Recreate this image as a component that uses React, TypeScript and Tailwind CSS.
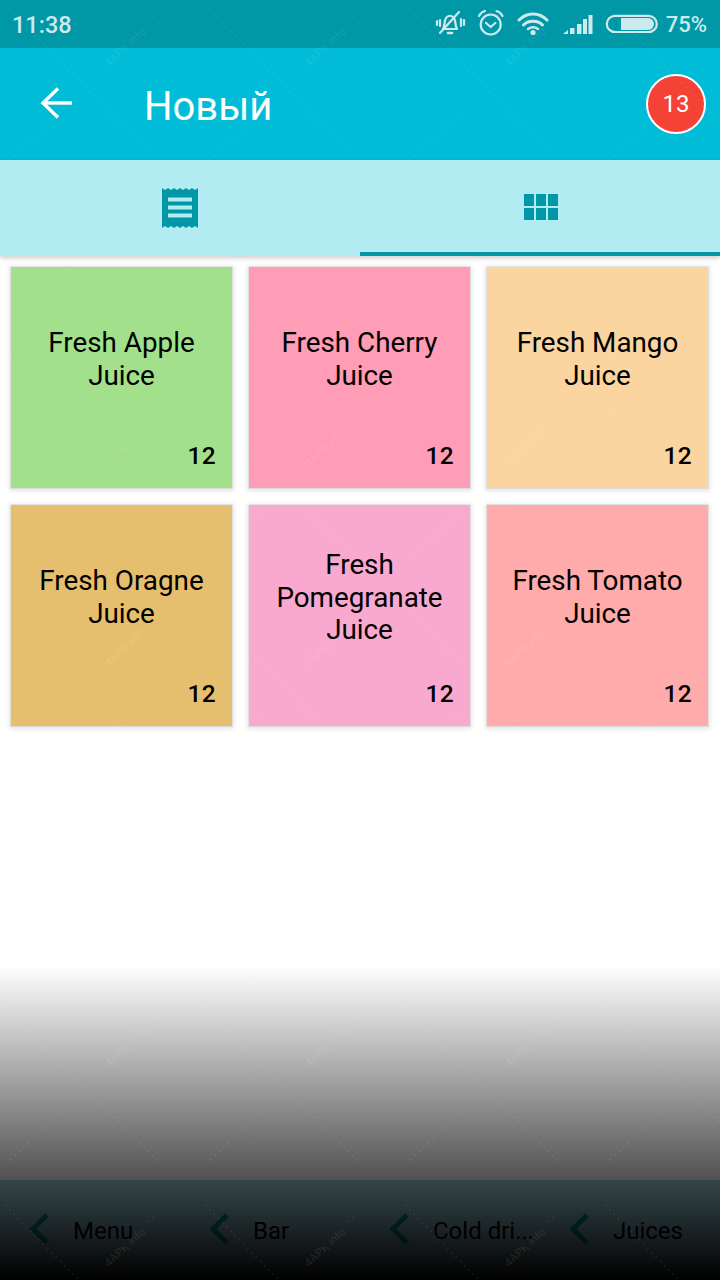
const TILES = [
  { name: ['Fresh Apple', 'Juice'], bg: 'bg-[#a2e08c]' },
  { name: ['Fresh Cherry', 'Juice'], bg: 'bg-[#ff9cb6]' },
  { name: ['Fresh Mango', 'Juice'], bg: 'bg-[#fad59f]' },
  { name: ['Fresh Oragne', 'Juice'], bg: 'bg-[#e6bf6e]' },
  { name: ['Fresh', 'Pomegranate', 'Juice'], bg: 'bg-[#f9a8cf]' },
  { name: ['Fresh Tomato', 'Juice'], bg: 'bg-[#ffabab]' },
]

const CRUMBS = ['Menu', 'Bar', 'Cold dri...', 'Juices']

const MARK_X = [0, 200, 400, 600]
const MARK_Y = [0, 200, 400, 600, 800, 1000, 1200]

function StatusIcons() {
  return (
    <svg width="280" height="48" viewBox="0 0 280 48" fill="none" stroke="#cdeaee" className="shrink-0">
      {/* muted bell */}
      <g strokeWidth="2.2" strokeLinecap="round" strokeLinejoin="round">
        <path d="M21 29 C23 26 22 21 24 18 C26 15 30 15 32 18 C34 21 33 26 35 29 Z" />
        <path d="M26 33 h4" strokeWidth="2.6" />
        <path d="M18 33 L37 12" />
        <path d="M18 20 v6 M15 21 v4 M39 19 v7 M42 20 v5" />
      </g>
      {/* alarm */}
      <g strokeWidth="2.2" strokeLinecap="round" strokeLinejoin="round">
        <circle cx="68.7" cy="24.5" r="10" />
        <path d="M64 23 l4.7 4 l4.7 -4" />
        <path d="M57 16 q2 -4 6 -5 M80.5 16 q-2 -4 -6 -5" />
      </g>
      {/* wifi */}
      <g strokeWidth="3" strokeLinecap="round">
        <path d="M97 20 C105 12 117 12 125 20" />
        <path d="M101.5 25 C106 20 116 20 120.5 25" />
        <path d="M106 29 C109 27 113 27 116 29" strokeWidth="2.5" />
      </g>
      <circle cx="111" cy="32.5" r="2.6" fill="#cdeaee" stroke="none" />
      {/* signal */}
      <g fill="#cdeaee" stroke="none">
        <path d="M141 34 l5 -4 v4 z" />
        <rect x="148" y="28" width="4.5" height="6" />
        <rect x="155" y="24" width="4.5" height="10" />
        <rect x="161" y="19" width="4" height="15" />
        <rect x="166.5" y="15" width="4" height="19" />
      </g>
      {/* battery */}
      <rect x="184.8" y="15.8" width="50" height="16.2" rx="8.1" strokeWidth="2.2" />
      <path d="M199 18 h27 a6 6 0 0 1 0 12 h-27 z" fill="#cdeaee" stroke="none" />
    </svg>
  )
}

function Tile({ name, bg }: { name: string[]; bg: string }) {
  return (
    <div className={`relative h-[221px] shadow-[0_0_0_1px_rgba(0,0,0,0.05),0_1px_4px_2px_rgba(0,0,0,0.1)] ${bg}`}>
      <div className="flex h-[184px] flex-col items-center justify-center pt-[2px] text-center text-[27.8px] leading-[32.7px] text-black">
        {name.map(line => <div key={line}>{line}</div>)}
      </div>
      <span className="absolute right-[16px] bottom-[17px] text-[24.5px] leading-[30px] font-medium tracking-[0.3px] text-black">12</span>
    </div>
  )
}

function Watermark() {
  return (
    <svg aria-hidden width="720" height="1280" viewBox="0 0 720 1280" className="pointer-events-none absolute inset-0" fill="none">
      {MARK_Y.map(ty => MARK_X.map(tx => (
        <g key={`${tx}-${ty}`} transform={`translate(${tx} ${ty})`}>
          <g stroke="white" strokeOpacity="0.08" strokeWidth="1.5" strokeDasharray="2 4">
            <path d="M5 5 L160 163" />
            <path d="M10 160 L63 110" />
            <path d="M148 22 L158 13" />
          </g>
          {tx < 600 && (
            <text x="125" y="51" textAnchor="middle" transform="rotate(-43 125 47)" fontSize="11.5" fill="white" fillOpacity="0.1">4APK.info</text>
          )}
        </g>
      )))}
    </svg>
  )
}

export default function App() {
  return (
    <div className="relative flex h-[1280px] w-[720px] flex-col overflow-hidden bg-white font-['Roboto',sans-serif]">
      <div className="flex h-[48px] items-center justify-between bg-[#0097a7] pr-[13px] pl-[12px]">
        <span className="mt-[3px] text-[23.5px] font-medium text-[#cdeaee]">11:38</span>
        <div className="flex items-center">
          <StatusIcons />
          <span className="mt-[1px] -ml-[36px] text-[22px] font-medium text-[#cdeaee]">75%</span>
        </div>
      </div>

      <div className="flex h-[112px] items-center bg-[#00bcd6] pr-[14px] pl-[40px]">
        <svg width="32" height="32" viewBox="0 0 32 32" fill="none" stroke="white" strokeWidth="3.4" className="-mt-[2px] shrink-0">
          <path d="M32 16 H3" />
          <path d="M18 1.5 L3 16 L18 30.5" />
        </svg>
        <h1 className="mt-[5px] ml-[72px] text-[40px] leading-none font-normal text-white">Новый</h1>
        <div className="ml-auto flex h-[60px] w-[60px] items-center justify-center rounded-full border-2 border-white bg-[#f44336] text-[24px] text-white">13</div>
      </div>

      <div className="relative z-10 flex h-[96px] bg-[#b2ebf2] shadow-[0_2px_5px_rgba(0,0,0,0.2)]">
        <div className="flex flex-1 items-center justify-center">
          <svg width="36" height="40" viewBox="0 0 36 40" fill="#0097a7">
            <path d="M0 0 l3 2 l3 -2 l3 2 l3 -2 l3 2 l3 -2 l3 2 l3 -2 l3 2 l3 -2 l3 2 l3 -2 V40 l-3 -2 l-3 2 l-3 -2 l-3 2 l-3 -2 l-3 2 l-3 -2 l-3 2 l-3 -2 l-3 2 l-3 -2 l-3 2 Z" />
            <rect x="6" y="9.5" width="24" height="4" fill="#b2ebf2" />
            <rect x="6" y="17.5" width="24" height="4" fill="#b2ebf2" />
            <rect x="6" y="25.5" width="24" height="4" fill="#b2ebf2" />
          </svg>
        </div>
        <div className="flex flex-1 items-center justify-center border-b-4 border-[#0097a7]">
          <svg width="34" height="26" viewBox="0 0 34 26" fill="#0097a7" className="mt-[2px] ml-[2px]">
            <rect x="0" y="0" width="10" height="12" />
            <rect x="12" y="0" width="10" height="12" />
            <rect x="24" y="0" width="10" height="12" />
            <rect x="0" y="14" width="10" height="12" />
            <rect x="12" y="14" width="10" height="12" />
            <rect x="24" y="14" width="10" height="12" />
          </svg>
        </div>
      </div>

      <div className="grid flex-1 grid-cols-[221px_221px_221px] content-start gap-[17px] pt-[11px] pl-[11px]">
        {TILES.map(t => <Tile key={t.name.join(' ')} name={t.name} bg={t.bg} />)}
      </div>

      <div className="flex h-[100px] bg-[#a5dbe6]">
        {CRUMBS.map(c => (
          <div key={c} className="flex w-[180px] items-center pb-[3px] pl-[29px]">
            <svg width="20" height="32" viewBox="0 0 20 32" fill="none" stroke="#0097a7" strokeWidth="5" className="shrink-0">
              <path d="M18 2 L4 16 L18 30" />
            </svg>
            <span className="mt-[5px] ml-[24px] text-[24px] text-black">{c}</span>
          </div>
        ))}
      </div>

      {/* dim fade over the bottom of the page */}
      <div className="pointer-events-none absolute inset-x-0 top-[965px] bottom-0 bg-[linear-gradient(to_bottom,rgba(0,0,0,0),rgba(0,0,0,1))]" />
      <Watermark />
    </div>
  )
}
